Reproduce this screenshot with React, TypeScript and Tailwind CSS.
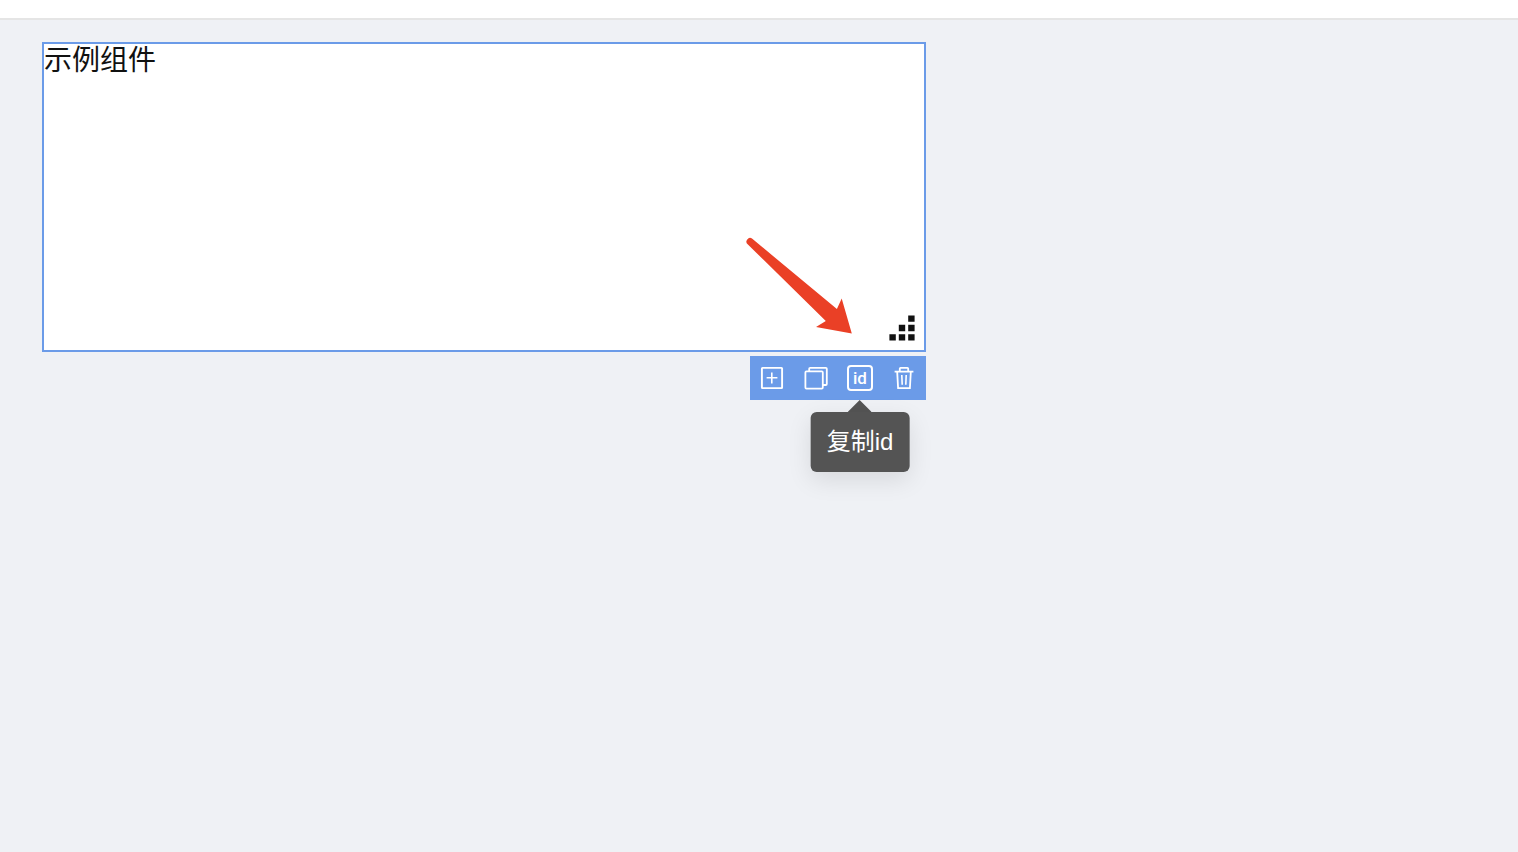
import type { ReactNode } from "react";

function ToolButton({ label, children }: { label: string; children: ReactNode }) {
  return (
    <button
      type="button"
      aria-label={label}
      className="flex size-11 cursor-pointer items-center justify-center text-white"
    >
      {children}
    </button>
  );
}

const iconProps = {
  width: 28,
  height: 28,
  viewBox: "0 0 28 28",
  fill: "none",
  stroke: "currentColor",
  "aria-hidden": true,
} as const;

function AddIcon() {
  return (
    <svg {...iconProps} strokeWidth="1.9">
      <rect x="3.9" y="3.9" width="20.2" height="20.2" rx="0.6" />
      <path d="M8.6 13.8h10.8M13.8 8.6v10.8" strokeWidth="1.6" />
    </svg>
  );
}

function CopyIcon() {
  return (
    <svg {...iconProps} strokeWidth="1.8">
      <rect x="3.4" y="7.4" width="17.4" height="17.2" rx="1" />
      <path d="M7.2 7V4.8a1 1 0 0 1 1-1h15.6a1 1 0 0 1 1 1V20a1 1 0 0 1-1 1H21" />
    </svg>
  );
}

function TrashIcon() {
  return (
    <svg {...iconProps} strokeWidth="1.8">
      <path d="M4.6 7.6h18.8M9.8 7.4V4.6a.8.8 0 0 1 .8-.8h6.8a.8.8 0 0 1 .8.8v2.8M7.2 8l.9 16.2h11.8L20.8 8" />
      <path d="M11.8 11l.4 9.8M16.2 11l-.4 9.8" strokeWidth="1.6" />
    </svg>
  );
}

function ResizeGrip() {
  return (
    <svg width="26" height="26" viewBox="0 0 26 26" fill="#111" aria-hidden="true">
      <path d="M19.2.4h6.4v6.4h-6.4zM9.8 9.8h6.4v6.4H9.8zM19.2 9.8h6.4v6.4h-6.4zM.4 19.2h6.4v6.4H.4zM9.8 19.2h6.4v6.4H9.8zM19.2 19.2h6.4v6.4h-6.4z" />
    </svg>
  );
}

function PointerArrow() {
  return (
    <svg width="106" height="98" viewBox="0 0 106 98" aria-hidden="true">
      <path
        d="M6.3 2.8 90.9 73 95.7 62.6 105.8 97.4 70 91 79.8 85 1.9 8.5A3.5 3.5 0 0 1 6.3 2.8Z"
        fill="#ea4026"
      />
    </svg>
  );
}

export default function App() {
  return (
    <div className="flex min-h-screen flex-col bg-[#eff1f5] font-['Noto_Sans_CJK_SC',sans-serif]">
      <header className="h-5 border-b-2 border-[#e5e5e5] bg-white" />
      <main className="flex-1 px-[42px] pt-[22px]">
        <div className="flex w-[884px] max-w-full flex-col items-end gap-1">
          <section className="relative min-h-[310px] w-full border-2 border-[#6b9be8] bg-white">
            <p className="text-[28px] leading-7 font-normal text-[#111]">示例组件</p>
            <div className="absolute right-[9px] bottom-[9px] cursor-se-resize">
              <ResizeGrip />
            </div>
            <div className="absolute right-[72px] bottom-[16px]">
              <PointerArrow />
            </div>
          </section>
          <div role="toolbar" className="flex bg-[#6b9be8]">
            <ToolButton label="添加">
              <AddIcon />
            </ToolButton>
            <ToolButton label="复制">
              <CopyIcon />
            </ToolButton>
            <div className="relative">
              <ToolButton label="复制id">
                <span className="flex size-[26px] items-center justify-center rounded-[4px] border-2 border-white font-['Roboto',sans-serif] text-[17px] leading-5 font-medium">
                  id
                </span>
              </ToolButton>
              <div
                role="tooltip"
                className="absolute top-full left-1/2 flex -translate-x-1/2 flex-col items-center"
              >
                <svg width="24" height="12" viewBox="0 0 24 12" fill="#545454" aria-hidden="true">
                  <path d="M0 12 12 0l12 12z" />
                </svg>
                <div className="rounded-md bg-[#545454] px-4 py-3 font-['Liberation_Sans','Noto_Sans_CJK_SC',sans-serif] text-2xl leading-9 whitespace-nowrap text-white shadow-[0_8px_24px_rgba(0,0,0,0.1)]">
                  复制id
                </div>
              </div>
            </div>
            <ToolButton label="删除">
              <TrashIcon />
            </ToolButton>
          </div>
        </div>
      </main>
    </div>
  );
}
